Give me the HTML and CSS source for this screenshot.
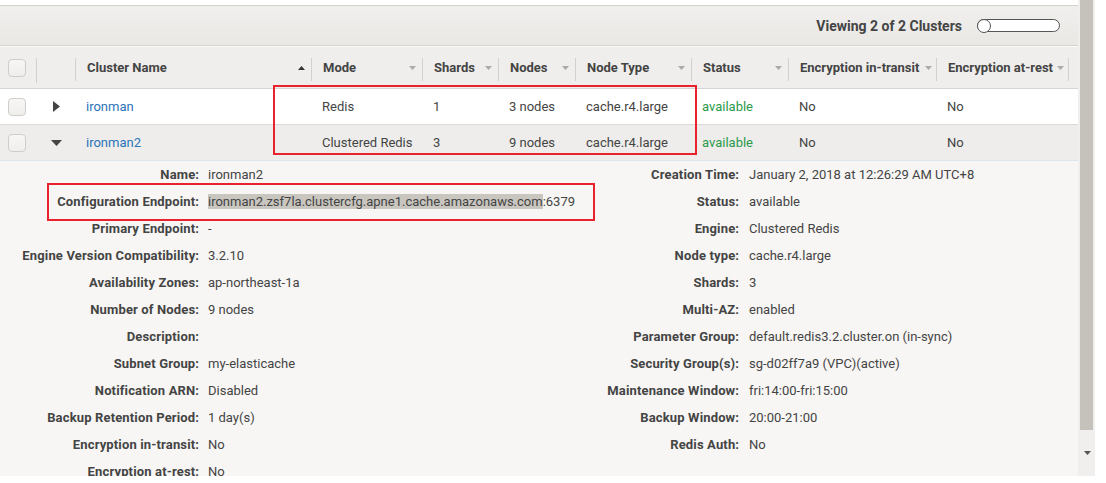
FILE: index.html
```html
<!DOCTYPE html>
<html>
<head>
<meta charset="utf-8">
<link rel="stylesheet" href="styles.css">
</head>
<body>
<div class="frame">
  <div class="content">
    <div class="topstrip"></div>
    <div class="toolbar">
      <span class="viewing">Viewing 2 of 2 Clusters</span>
      <span class="toggle"><span class="knob"></span></span>
    </div>
    <div class="table">
      <div class="row head">
        <div class="cell cb-cell sep"><span class="cb"></span></div>
        <div class="cell sep"></div>
        <div class="cell sep hc"><span>Cluster Name</span><svg class="sort" width="7" height="4" viewBox="0 0 7 4"><path d="M0 4 L3.5 0 L7 4 Z" fill="#333"/></svg></div>
        <div class="cell sep hc"><span>Mode</span><svg class="dd" width="7" height="4" viewBox="0 0 7 4"><path d="M0 0 L7 0 L3.5 4 Z" fill="#aaa"/></svg></div>
        <div class="cell sep hc"><span>Shards</span><svg class="dd" width="7" height="4" viewBox="0 0 7 4"><path d="M0 0 L7 0 L3.5 4 Z" fill="#aaa"/></svg></div>
        <div class="cell sep hc"><span>Nodes</span><svg class="dd" width="7" height="4" viewBox="0 0 7 4"><path d="M0 0 L7 0 L3.5 4 Z" fill="#aaa"/></svg></div>
        <div class="cell sep hc"><span>Node Type</span><svg class="dd" width="7" height="4" viewBox="0 0 7 4"><path d="M0 0 L7 0 L3.5 4 Z" fill="#aaa"/></svg></div>
        <div class="cell sep hc"><span>Status</span><svg class="dd" width="7" height="4" viewBox="0 0 7 4"><path d="M0 0 L7 0 L3.5 4 Z" fill="#aaa"/></svg></div>
        <div class="cell sep hc tight"><span>Encryption in-transit</span><svg class="dd" width="7" height="4" viewBox="0 0 7 4"><path d="M0 0 L7 0 L3.5 4 Z" fill="#aaa"/></svg></div>
        <div class="cell sep hc tight"><span>Encryption at-rest</span><svg class="dd" width="7" height="4" viewBox="0 0 7 4"><path d="M0 0 L7 0 L3.5 4 Z" fill="#aaa"/></svg></div>
        <div class="cell"></div>
      </div>
      <div class="row body r1">
        <div class="cell cb-cell"><span class="cb"></span></div>
        <div class="cell exp"><svg width="7" height="11" viewBox="0 0 7 11"><path d="M0 0 L7 5.5 L0 11 Z" fill="#444"/></svg></div>
        <div class="cell link">ironman</div>
        <div class="cell">Redis</div>
        <div class="cell">1</div>
        <div class="cell">3 nodes</div>
        <div class="cell">cache.r4.large</div>
        <div class="cell ok">available</div>
        <div class="cell">No</div>
        <div class="cell">No</div>
        <div class="cell"></div>
      </div>
      <div class="row body r2">
        <div class="cell cb-cell"><span class="cb"></span></div>
        <div class="cell exp"><svg width="11" height="6" viewBox="0 0 11 6"><path d="M0 0 L11 0 L5.5 6 Z" fill="#444"/></svg></div>
        <div class="cell link">ironman2</div>
        <div class="cell">Clustered Redis</div>
        <div class="cell">3</div>
        <div class="cell">9 nodes</div>
        <div class="cell">cache.r4.large</div>
        <div class="cell ok">available</div>
        <div class="cell">No</div>
        <div class="cell">No</div>
        <div class="cell"></div>
      </div>
      <div class="mark mark-table"></div>
    </div>
    <div class="details">
      <div class="pane left">
        <div class="k">Name:</div><div class="v">ironman2</div>
        <div class="k">Configuration Endpoint:</div><div class="v"><span class="hl">ironman2.zsf7la.clustercfg.apne1.cache.amazonaws.com</span>:6379</div>
        <div class="k">Primary Endpoint:</div><div class="v">-</div>
        <div class="k">Engine Version Compatibility:</div><div class="v">3.2.10</div>
        <div class="k">Availability Zones:</div><div class="v">ap-northeast-1a</div>
        <div class="k">Number of Nodes:</div><div class="v">9 nodes</div>
        <div class="k">Description:</div><div class="v"></div>
        <div class="k">Subnet Group:</div><div class="v">my-elasticache</div>
        <div class="k">Notification ARN:</div><div class="v">Disabled</div>
        <div class="k">Backup Retention Period:</div><div class="v">1 day(s)</div>
        <div class="k">Encryption in-transit:</div><div class="v">No</div>
        <div class="k">Encryption at-rest:</div><div class="v">No</div>
      </div>
      <div class="pane right">
        <div class="k">Creation Time:</div><div class="v">January 2, 2018 at 12:26:29 AM UTC+8</div>
        <div class="k">Status:</div><div class="v">available</div>
        <div class="k">Engine:</div><div class="v">Clustered Redis</div>
        <div class="k">Node type:</div><div class="v">cache.r4.large</div>
        <div class="k">Shards:</div><div class="v">3</div>
        <div class="k">Multi-AZ:</div><div class="v">enabled</div>
        <div class="k">Parameter Group:</div><div class="v">default.redis3.2.cluster.on (in-sync)</div>
        <div class="k">Security Group(s):</div><div class="v">sg-d02ff7a9 (VPC)(active)</div>
        <div class="k">Maintenance Window:</div><div class="v">fri:14:00-fri:15:00</div>
        <div class="k">Backup Window:</div><div class="v">20:00-21:00</div>
        <div class="k">Redis Auth:</div><div class="v">No</div>
      </div>
      <div class="mark mark-endpoint"></div>
    </div>
  </div>
  <div class="scrollbar">
    <div class="thumb"></div>
    <div class="arrow"><svg width="7" height="4" viewBox="0 0 7 4"><path d="M0 0 L7 0 L3.5 4 Z" fill="#555"/></svg></div>
  </div>
</div>
</body>
</html>
```

FILE: styles.css
```css
* { box-sizing: border-box; }
html, body { margin: 0; padding: 0; background: #fff; }
body { font-family: Roboto, "Liberation Sans", Arial, sans-serif; font-size: 13px; color: #444; }

.frame { display: flex; width: 1095px; height: 476px; }
.content { width: 1078px; height: 476px; overflow: hidden; background: #f7f6f4; display: flex; flex-direction: column; }

.topstrip { height: 6px; background: #fff; border-bottom: 1px solid #d3d1cd; flex: none; }
.toolbar { height: 40px; flex: none; display: flex; align-items: center; justify-content: flex-end; padding-right: 18px; background: linear-gradient(#f0efed, #e9e8e5); border-bottom: 1px solid #d6d4d0; }
.viewing { font-weight: bold; font-size: 14px; color: #444; margin-right: 15px; }
.toggle { width: 83px; height: 13px; border: 1px solid #555; border-radius: 7px; background: #fff; display: flex; align-items: center; }
.knob { width: 14px; height: 14px; border: 1px solid #555; border-radius: 50%; background: #fff; margin-left: -1px; }

.table { position: relative; flex: none; }
.row { display: grid; grid-template-columns: 37px 39px 236px 111px 76px 77px 116px 97px 148px 132px 1fr; }
.head { height: 43px; background: #efeeec; border-top: 1px solid #fbfbfa; border-bottom: 1px solid #d6d4d0; }
.cell { display: flex; align-items: center; padding-left: 10px; white-space: nowrap; min-width: 0; }
.head .cell { position: relative; }
.hc { font-weight: bold; padding-left: 11px; padding-right: 7px; justify-content: space-between; }
.hc.tight { padding-right: 5px; }
.sep::after { content: ""; position: absolute; right: 0; top: 11px; height: 23px; border-right: 1px solid #d3d1cd; }
.head .cell:first-child.sep::after { top: 11px; height: 25px; }
.cb-cell { padding-left: 8px; }
.cb { display: block; width: 18px; height: 18px; border: 1px solid #cfcdc9; border-radius: 4px; background: linear-gradient(#f7f6f4, #efeeec); }
.body { height: 36px; border-bottom: 1px solid #dcdad6; }
.r1 { background: #fff; }
.r2 { background: #eeedeb; border-bottom-color: #d9e5ef; }
.exp { justify-content: center; padding-left: 0; }
.link { color: #2b74b8; }
.ok { color: #2a9a4b; }

.mark { position: absolute; border: 2px solid #e8232e; pointer-events: none; }
.mark-table { left: 273px; top: 39px; width: 424px; height: 70px; }

.details { position: relative; display: flex; flex: none; }
.pane { display: grid; grid-auto-rows: 27px; align-items: center; }
.pane.left { width: 540px; grid-template-columns: 199px 1fr; column-gap: 9px; }
.pane.right { grid-template-columns: 199px 1fr; column-gap: 10px; }
.k { font-weight: bold; text-align: right; white-space: nowrap; letter-spacing: 0.15px; margin-right: -0.15px; }
.v { white-space: nowrap; }
.hl { background: #c9c6c0; }
.mark-endpoint { left: 47px; top: 22px; width: 548px; height: 38px; }

.scrollbar { width: 17px; height: 476px; background: #f0efed; display: flex; flex-direction: column; }
.thumb { width: 13px; height: 430px; margin-left: 2px; background: #c5c2bc; }
.arrow { flex: 1; display: flex; align-items: center; justify-content: center; padding-left: 2px; }
```
